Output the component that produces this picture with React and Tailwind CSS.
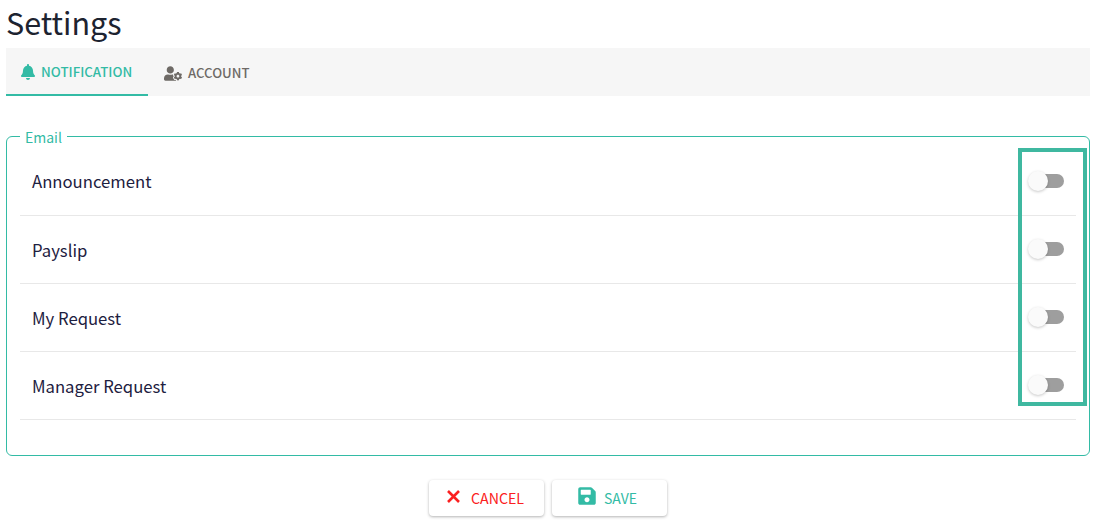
import React from "react";
import { FaBell, FaUserCog, FaSave } from "react-icons/fa";

const font = "font-['Noto_Sans_CJK_JP','Noto_Sans',sans-serif]";
const rows = ["Announcement", "Payslip", "My Request", "Manager Request"];

function Toggle() {
  return (
    <div className="relative w-[36px] h-[20px] -mt-[1px] flex items-center justify-end">
      <div className="w-[33px] h-[14px] rounded-full bg-[#9e9e9e]" />
      <div className="absolute left-0 top-0 w-[20px] h-[20px] rounded-full bg-[#fafafa] shadow-[0_1px_3px_rgba(0,0,0,0.22)]" />
    </div>
  );
}

export default function App() {
  return (
    <div className={`relative w-[1096px] h-[530px] bg-white overflow-hidden px-[6px] ${font}`}>
      <h1 className="h-[48px] text-[30.5px] leading-[45px] text-[#1d2330] font-normal">Settings</h1>
      <div className="flex h-[48px] bg-[#f6f6f6]">
        <div className="w-[142px] h-[48px] pt-[2px] pl-[15px] border-b-2 border-[#33bba5] flex items-center gap-[6px] text-[13.3px] font-medium text-[#33bba5]">
          <FaBell className="w-[14px] h-[16px]" />
          <span>NOTIFICATION</span>
        </div>
        <div className="ml-[16px] h-[48px] pt-[2px] flex items-center gap-[6px] text-[13.2px] font-medium text-[#6e6a66]">
          <FaUserCog className="w-[18px] h-[15px]" />
          <span>ACCOUNT</span>
        </div>
      </div>
      <fieldset className="mt-[31px] h-[329px] border border-[#33bba5] rounded-[6px] px-[13px] pt-[3px]">
        <legend className="ml-[0px] px-[5px] pt-[2px] text-[14px] leading-[16px] text-[#33bba5]">Email</legend>
        {rows.map((r, i) => (
          <div key={r} className="h-[68px] border-b border-[#e8e8e8] pl-[12px] pr-[12px] flex items-center justify-between text-[16.7px] text-[#1d2040]">
            <span className={i > 0 ? "pt-[2px]" : ""}>{r}</span>
            <Toggle />
          </div>
        ))}
      </fieldset>
      <div className="mt-[24px] flex justify-center gap-[8px]">
        <button className="w-[115px] h-[36px] pl-[18px] rounded-[4px] bg-white shadow-[0_1px_3px_rgba(0,0,0,0.3)] flex items-center gap-[11px] text-[14.2px] font-normal text-[#fb2020]">
          <svg viewBox="0 0 13 13" className="w-[13px] h-[13px] -mt-[3px]" fill="none" stroke="currentColor" strokeWidth="2.6">
            <path d="M1 1 L12 12 M12 1 L1 12" />
          </svg>
          <span className="pt-[2px]">CANCEL</span>
        </button>
        <button className="w-[115px] h-[36px] pl-[26px] rounded-[4px] bg-white shadow-[0_1px_3px_rgba(0,0,0,0.3)] flex items-center gap-[8px] text-[14px] font-normal text-[#33bba5]">
          <FaSave className="w-[18px] h-[20px] -mt-[5px]" />
          <span>SAVE</span>
        </button>
      </div>
      <div className="absolute left-[1018px] top-[148px] w-[69px] h-[258px] border-4 border-[#3fb8a0]" />
    </div>
  );
}
